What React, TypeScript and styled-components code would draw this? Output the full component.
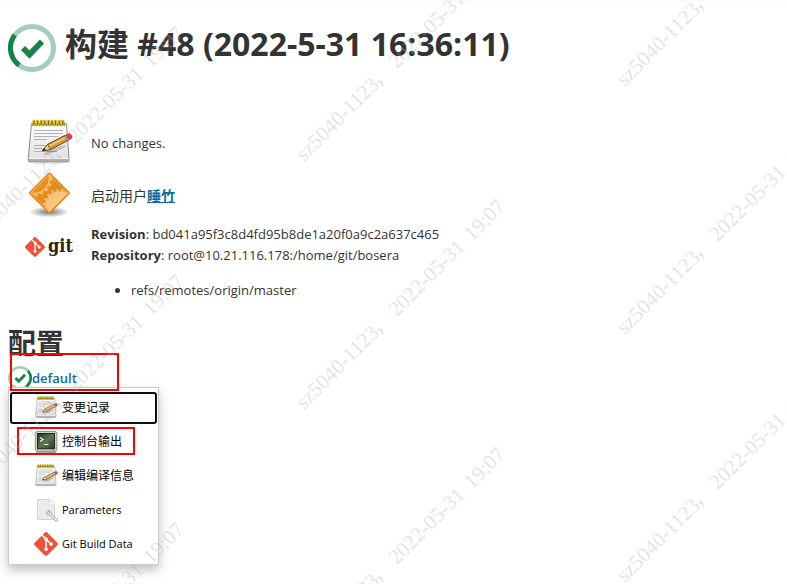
import React from "react";
import styled, { createGlobalStyle } from "styled-components";

const sans = `"Open Sans", "Noto Sans CJK SC", sans-serif`;

const GlobalStyle = createGlobalStyle`
  * { box-sizing: border-box; }
  html { background: #fff; }
  body {
    margin: 0;
    color: #333;
    font: 13px/21px ${sans};
  }
`;

const Page = styled.div`
  position: relative;
  min-height: 100vh;
  overflow: hidden;
  border-top: 1px solid #f8f8f8;
`;

const Main = styled.main`
  padding: 23px 8px 0;
`;

const TitleBar = styled.header`
  display: flex;
  gap: 9px;
  margin-bottom: 47px;
`;

const Title = styled.h1`
  margin: 0;
  font-size: 32px;
  line-height: 40px;
  font-weight: 700;
`;

const Summary = styled.section`
  display: flex;
  flex-direction: column;
  gap: 4px;
  padding-left: 17px;
`;

const SummaryRow = styled.div<{ $top?: boolean }>`
  display: flex;
  align-items: ${(p) => (p.$top ? "flex-start" : "center")};
  gap: 18px;
  min-height: 48px;
`;

const SummaryText = styled.div<{ $size?: number; $padTop?: number }>`
  flex: 1;
  padding-top: ${(p) => p.$padTop ?? 0}px;
  font-size: ${(p) => p.$size ?? 13}px;
`;

const UserLink = styled.a`
  color: #0b6aa2;
  font-weight: 700;
  text-decoration: underline;
`;

const BranchList = styled.ul`
  margin: 14px 0;
  padding-left: 40px;
`;

const ConfigSection = styled.section`
  margin-top: 10px;
`;

const SectionTitle = styled.h2`
  margin: 0;
  font-size: 28px;
  line-height: 36px;
  font-weight: 700;
`;

const ConfigEntry = styled.div`
  position: relative;
  margin-top: 4px;
`;

const ConfigLink = styled.a`
  display: inline-flex;
  align-items: center;
  height: 26px;
  color: #0b6aa2;
  font-weight: 600;
  text-decoration: none;
`;

const Highlight = styled.span<{ $left: number; $top: number; $width: number; $height: number }>`
  position: absolute;
  z-index: 2;
  left: ${(p) => p.$left}px;
  top: ${(p) => p.$top}px;
  width: ${(p) => p.$width}px;
  height: ${(p) => p.$height}px;
  border: 2px solid #f00;
  pointer-events: none;
`;

const Menu = styled.ul`
  position: absolute;
  z-index: 1;
  top: 22px;
  left: 0;
  display: flex;
  flex-direction: column;
  min-width: 151px;
  margin: 0;
  padding: 3px 0;
  list-style: none;
  background: #fff;
  border: 1px solid #ccc;
  box-shadow: 0 5px 10px rgba(0, 0, 0, 0.25);
`;

const MenuItem = styled.li`
  position: relative;
`;

const MenuLink = styled.a<{ $focused?: boolean; $size: number }>`
  display: flex;
  align-items: center;
  gap: 4px;
  height: 32px;
  margin: 1px;
  padding: 0 10px 0 22px;
  border: 2px solid ${(p) => (p.$focused ? "#101010" : "transparent")};
  border-radius: 3px;
  color: #000;
  font-size: ${(p) => p.$size}px;
  line-height: 20px;
  text-decoration: none;
  white-space: nowrap;
`;

const Icon = styled.svg`
  flex: none;
  display: block;
`;

const WatermarkLayer = styled.svg`
  position: absolute;
  z-index: 5;
  inset: 0;
  width: 100%;
  height: 100%;
  pointer-events: none;
  fill: rgba(178, 178, 178, 0.36);
  font: 21px "Liberation Serif", "Noto Sans CJK SC", serif;
`;

type IconProps = { size: number };

function SuccessIcon({ size, flip }: IconProps & { flip?: boolean }) {
  return (
    <Icon width={size} height={size} viewBox="0 0 48 48" fill="none" aria-hidden="true">
      <circle cx="24" cy="24" r="21.5" stroke="#a3cfb7" strokeWidth="5" />
      <path
        d={flip ? "M40 9.6A21.5 21.5 0 0 1 37 41" : "M6.8 11A21.5 21.5 0 0 0 11.2 41.2"}
        stroke="#15834a"
        strokeWidth="5"
      />
      <path d="m15 24 6.5 6.5L34 17.5" stroke="#15834a" strokeWidth="5.8" />
    </Icon>
  );
}

function NotepadIcon({ size }: IconProps) {
  const id = `paper${size}`;
  return (
    <Icon width={size} height={size} viewBox="0 0 48 48" fill="none" aria-hidden="true">
      <defs>
        <linearGradient id={id} x1="0" y1="0" x2="0" y2="1">
          <stop offset="0" stopColor="#fff" />
          <stop offset="1" stopColor="#dedede" />
        </linearGradient>
      </defs>
      <ellipse cx="24" cy="43" rx="20" ry="2" fill="#000" opacity=".12" />
      <path d="M6.5 4.5h35l2.5 35v2.5q0 .7-.8.7H4q-.8 0-.7-.8v-3Z" fill={`url(#${id})`} stroke="#8a8a86" />
      <path d="M4 39.5h39.5v2.7H4Z" fill="#aeb0ac" />
      <path d="M4 39.3h39.5" stroke="#fff" />
      <path d="M9 11.5h29M9 14.5h29M9 17.5h24M9 20.5h13M9 26.5h15M9 29.5h8M9 32.5h23" stroke="#aaa" strokeWidth=".9" />
      <path d="M7 5.5h33" stroke="#5d5520" strokeWidth="2.4" />
      {Array.from({ length: 9 }, (_, i) => (
        <rect key={i} x={7.9 + i * 3.6} y="1" width="2.2" height="5.6" rx="1.1" fill="#6f6010" stroke="#ddc62a" strokeWidth="1.1" />
      ))}
      <ellipse cx="30" cy="31" rx="12" ry="2" transform="rotate(-22 30 31)" fill="#000" opacity=".17" />
      <path d="m17.2 31.8 5.3-6.3L40 16.3l3.2 5-17.7 9.3Z" fill="#d69a3d" stroke="#664017" />
      <path d="m23.8 26.2 16.8-8.8 1 1.5-16.9 8.9Z" fill="#f1c477" />
      <path d="m17.2 31.8 5.3-6.3 3 5.1Z" fill="#eed2a0" stroke="#664017" strokeWidth=".7" />
      <path d="m17.2 31.8 2.2-2.7 1.3 2Z" fill="#222" />
      <path d="m39.2 16.8 2-1 3.1 4.9-2 1.1Z" fill="#a8aaa4" stroke="#555" strokeWidth=".5" />
      <path d="m41.2 15.8 2.3-1c2-.7 4.5 2.4 3.1 4.5l-2.3 1.4Z" fill="#ee3c47" stroke="#a81b23" strokeWidth=".6" />
    </Icon>
  );
}

function CauseIcon({ size }: IconProps) {
  return (
    <Icon width={size} height={size} viewBox="0 0 48 48" fill="none" aria-hidden="true">
      <defs>
        <linearGradient id="cause" x1="0" y1="0" x2="1" y2="1">
          <stop offset="0" stopColor="#e9962a" />
          <stop offset="1" stopColor="#dc820c" />
        </linearGradient>
        <linearGradient id="gear" x1="0" y1="0" x2="1" y2="1">
          <stop offset="0" stopColor="#f6bd6c" />
          <stop offset="1" stopColor="#fbd9a5" />
        </linearGradient>
        <radialGradient id="causeShadow">
          <stop offset="0" stopColor="#000" stopOpacity=".55" />
          <stop offset="1" stopColor="#000" stopOpacity="0" />
        </radialGradient>
        <clipPath id="causeClip">
          <path d="m24.4 3.2 19 18.8-19 19-19-19Z" />
        </clipPath>
      </defs>
      <ellipse cx="24" cy="41" rx="20" ry="5.5" fill="url(#causeShadow)" />
      <path
        d="m23.4 2.2q1-1 2 0L44 20.9q1 1 0 2L25.4 41.6q-1 1-2 0L4.8 22.9q-1-1 0-2Z"
        fill="url(#cause)"
        stroke="#ed8617"
      />
      <g clipPath="url(#causeClip)">
        <circle cx="35" cy="35" r="15" fill="url(#gear)" />
        <circle cx="35" cy="35" r="15.8" stroke="#f6bd6c" strokeWidth="2.6" strokeDasharray="2.6 2.4" />
        <circle cx="9" cy="7" r="15.5" stroke="#f6bd6c" strokeWidth="1.6" />
        <circle cx="9" cy="7" r="17.2" stroke="#f6bd6c" strokeWidth="2.6" strokeDasharray="2.8 3" />
      </g>
      <path d="m24.4 3.8 18.2 18.1-18.2 18.2L6.2 21.9Z" stroke="#f9bd69" strokeWidth=".7" />
    </Icon>
  );
}

const gitMark =
  "M23.546 10.93L13.067.452c-.604-.603-1.582-.603-2.188 0L8.708 2.627l2.76 2.76c.645-.215 1.379-.07 1.889.441.516.515.658 1.258.438 1.9l2.658 2.66c.645-.223 1.387-.078 1.9.435.721.72.721 1.884 0 2.604-.719.719-1.881.719-2.6 0-.539-.541-.674-1.337-.404-1.996L12.86 8.955v6.525c.176.086.342.203.488.348.713.721.713 1.883 0 2.6-.719.721-1.889.721-2.609 0-.719-.719-.719-1.879 0-2.598.182-.18.387-.316.605-.406V8.835c-.217-.091-.424-.222-.6-.401-.545-.545-.676-1.342-.396-2.009L7.636 3.7.45 10.881c-.6.605-.6 1.584 0 2.189l10.48 10.477c.604.604 1.582.604 2.186 0l10.43-10.43c.605-.603.605-1.582 0-2.187";

function GitIcon({ size }: IconProps) {
  return (
    <Icon width={size} height={size} viewBox="0 0 24 24" aria-hidden="true">
      <path d={gitMark} fill="#f05033" />
    </Icon>
  );
}

const GitLogoBox = styled.div`
  display: flex;
  align-items: center;
  gap: 3px;
  width: 48px;
  height: 48px;
`;

const GitWord = styled.span`
  padding-bottom: 3px;
  color: #362701;
  font: 700 18px/20px "DejaVu Serif Condensed", "DejaVu Serif", serif;
`;

function TerminalIcon({ size }: IconProps) {
  return (
    <Icon width={size} height={size} viewBox="0 0 24 24" fill="none" aria-hidden="true">
      <defs>
        <linearGradient id="screen" x1="0" y1="0" x2="1" y2="1">
          <stop offset="0" stopColor="#263620" />
          <stop offset=".5" stopColor="#5d7450" />
          <stop offset="1" stopColor="#2a3b24" />
        </linearGradient>
      </defs>
      <path d="M3 21h18l1.5 1.8h-21Z" fill="#8b8d88" />
      <rect x="1.3" y="1.5" width="21.6" height="19.8" rx="2" fill="#d0d2cd" stroke="#91938e" />
      <rect x="3.5" y="3.5" width="17" height="15.3" fill="url(#screen)" stroke="#1b2619" />
      <path d="m6 7.5 3.2 2L6 11.5M10 14.5h4.5" stroke="#f5fff0" strokeWidth="1.1" />
      <path d="M18 20h2" stroke="#7ab050" />
    </Icon>
  );
}

function ParametersIcon({ size }: IconProps) {
  return (
    <Icon width={size} height={size} viewBox="0 0 24 24" fill="none" aria-hidden="true">
      <path d="M3.5 1.5H15q4 1 5.5 6v14h-17Z" fill="#ececeb" stroke="#d3d3d1" />
      <path d="M15 1.5q1.5 2.5 0 6 3-1 5.5 0-1-5-5.5-6Z" fill="#fafafa" stroke="#d3d3d1" strokeWidth=".6" />
      <path
        d="M13.5 12.6c2.2-.8 4.3 1 3.9 3.2l5.9 5.4c1.2 1.3-.8 3-2 1.8l-5.3-5.8c-2.3.5-4.2-1.2-3.7-3.4l2.2 2 1.3-1.2Z"
        fill="#e4e5e3"
        stroke="#a0a29e"
        strokeWidth=".8"
      />
    </Icon>
  );
}

const steps = [0, 1, 2];

function Watermark() {
  return (
    <WatermarkLayer aria-hidden="true">
      {steps.map((column) =>
        steps.map((row) => (
          <text
            key={`${column}-${row}`}
            transform={`translate(${-17 + column * 321} ${236 - column * 75 + row * 248}) rotate(-45)`}
          >
            <tspan x="0">sz5040-1123</tspan>
            <tspan x="105">，</tspan>
            <tspan x="131">2022-05-31</tspan>
            <tspan x="238">19:07</tspan>
          </text>
        ))
      )}
    </WatermarkLayer>
  );
}

const menuItems = [
  { label: "变更记录", Glyph: NotepadIcon, textSize: 12, focused: true },
  { label: "控制台输出", Glyph: TerminalIcon, textSize: 12, marked: true },
  { label: "编辑编译信息", Glyph: NotepadIcon, textSize: 12 },
  { label: "Parameters", Glyph: ParametersIcon, textSize: 11 },
  { label: "Git Build Data", Glyph: GitIcon, textSize: 11 },
];

export default function App() {
  return (
    <Page>
      <GlobalStyle />
      <Main>
        <TitleBar>
          <SuccessIcon size={48} />
          <Title>构建 #48 (2022-5-31 16:36:11)</Title>
        </TitleBar>

        <Summary>
          <SummaryRow>
            <NotepadIcon size={48} />
            <SummaryText>No changes.</SummaryText>
          </SummaryRow>
          <SummaryRow>
            <CauseIcon size={48} />
            <SummaryText $size={14}>
              启动用户<UserLink href="#user">睡竹</UserLink>
            </SummaryText>
          </SummaryRow>
          <SummaryRow $top>
            <GitLogoBox>
              <GitIcon size={20} />
              <GitWord>git</GitWord>
            </GitLogoBox>
            <SummaryText $padTop={1}>
              <div>
                <b>Revision</b>: bd041a95f3c8d4fd95b8de1a20f0a9c2a637c465
              </div>
              <div>
                <b>Repository</b>: root@10.21.116.178:/home/git/bosera
              </div>
              <BranchList>
                <li>refs/remotes/origin/master</li>
              </BranchList>
            </SummaryText>
          </SummaryRow>
        </Summary>

        <ConfigSection>
          <SectionTitle>配置</SectionTitle>
          <ConfigEntry>
            <ConfigLink href="#default">
              <SuccessIcon size={24} flip />
              default
            </ConfigLink>
            <Highlight $left={2} $top={-12} $width={109} $height={38} />
            <Menu>
              {menuItems.map(({ label, Glyph, textSize, focused, marked }) => (
                <MenuItem key={label}>
                  <MenuLink href="#" $focused={focused} $size={textSize}>
                    <Glyph size={24} />
                    {label}
                  </MenuLink>
                  {marked && <Highlight $left={8} $top={2} $width={118} $height={28} />}
                </MenuItem>
              ))}
            </Menu>
          </ConfigEntry>
        </ConfigSection>
      </Main>
      <Watermark />
    </Page>
  );
}
